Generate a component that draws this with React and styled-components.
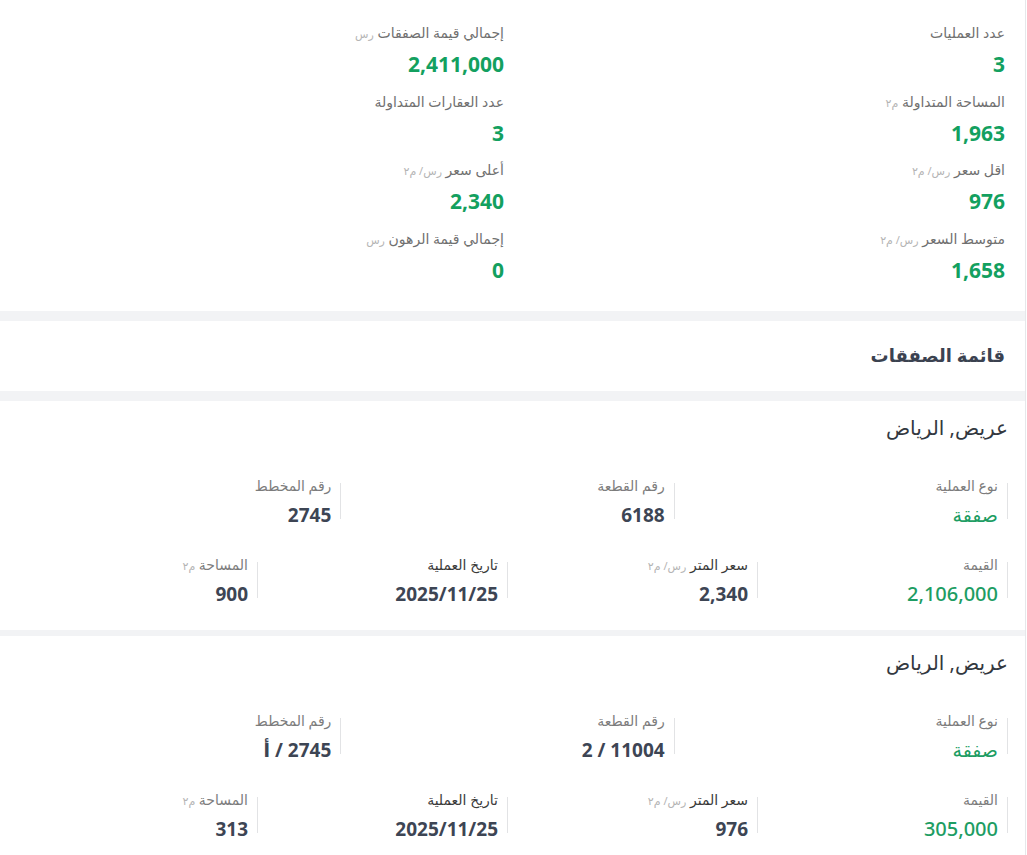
import React from "react";
import styled, { createGlobalStyle } from "styled-components";

const GlobalStyle = createGlobalStyle`
  html, body {
    margin: 0;
    padding: 0;
    background: #ffffff;
  }
  body {
    font-family: "Noto Sans", "DejaVu Sans", sans-serif;
  }
`;

const summary = [
  { label: "عدد العمليات", value: "3" },
  { label: "إجمالي قيمة الصفقات", unit: "رس", value: "2,411,000" },
  { label: "المساحة المتداولة", unit: "م٢", value: "1,963" },
  { label: "عدد العقارات المتداولة", value: "3" },
  { label: "اقل سعر", unit: "رس/ م٢", value: "976" },
  { label: "أعلى سعر", unit: "رس/ م٢", value: "2,340" },
  { label: "متوسط السعر", unit: "رس/ م٢", value: "1,658" },
  { label: "إجمالي قيمة الرهون", unit: "رس", value: "0" },
];

const deals = [
  {
    place: "عريض, الرياض",
    type: "صفقة",
    parcel: "6188",
    plan: "2745",
    price: "2,106,000",
    meter: "2,340",
    date: "2025/11/25",
    area: "900",
  },
  {
    place: "عريض, الرياض",
    type: "صفقة",
    parcel: "11004 / 2",
    plan: "2745 / أ",
    price: "305,000",
    meter: "976",
    date: "2025/11/25",
    area: "313",
  },
];

const Page = styled.div`
  width: 1025px;
  border-right: 1px solid #e6e7ea;
  background: #f2f3f5;
  display: flex;
  flex-direction: column;
`;

const Section = styled.section`
  background: #ffffff;
  margin-bottom: ${(props) => props.$gap || "10px"};
  padding: ${(props) => props.$pad || "0"};
`;

const StatsGrid = styled.div`
  display: grid;
  grid-template-columns: 1fr 1fr;
  column-gap: 17px;
  row-gap: 11.5px;
  padding: 22px 20px 26px;
`;

const Stat = styled.div`
  display: flex;
  flex-direction: column;
  gap: 6px;
`;

const StatLabel = styled.div`
  font-size: 14px;
  line-height: 22px;
  height: 22px;
  color: #707070;
`;

const Unit = styled.span`
  font-size: 11px;
  line-height: 1;
  color: #b4b4b4;
`;

const StatValue = styled.div`
  font-size: 21px;
  line-height: 29px;
  height: 29px;
  font-weight: 700;
  color: #13a05f;
`;

const ListTitle = styled.h2`
  margin: 0;
  font-size: 18px;
  line-height: 28px;
  font-weight: 700;
  color: #3b4250;
  padding: 20px 20px 22px;
`;

const DealTitle = styled.h3`
  margin: 0 0 33px;
  font-size: 20px;
  line-height: 30px;
  height: 30px;
  font-weight: 400;
  color: #333840;
`;

const Row = styled.div`
  display: grid;
  grid-template-columns: repeat(${(props) => props.$cols}, 1fr);
  margin-bottom: ${(props) => props.$mb || "0"};
`;

const Field = styled.div`
  display: flex;
  flex-direction: column;
  gap: 6px;
  padding-right: 10px;
  background: linear-gradient(#e2e3e5, #e2e3e5) right 7px / 1px 36px no-repeat;
`;

const FieldLabel = styled.div`
  font-size: 14px;
  line-height: 20px;
  height: 20px;
  color: ${(props) => (props.$dark ? "#3a3a3a" : "#7c7c7c")};
`;

const FieldValue = styled.div`
  font-size: ${(props) => (props.$big ? "20px" : "19px")};
  line-height: 26px;
  height: 26px;
  font-weight: ${(props) => props.$weight || 700};
  color: ${(props) => (props.$green ? "#1d9d63" : "#3d4554")};
`;

const WithUnit = ({ text, unit }) => (
  <>
    {text}
    {unit && (
      <>
        {" "}
        <Unit>{unit}</Unit>
      </>
    )}
  </>
);

const DealItem = ({ label, unit, value, dark, green, big, weight }) => (
  <Field>
    <FieldLabel $dark={dark}>
      <WithUnit text={label} unit={unit} />
    </FieldLabel>
    <FieldValue $green={green} $big={big} $weight={weight}>
      {value}
    </FieldValue>
  </Field>
);

const DealCard = ({ deal, last }) => (
  <Section $gap={last ? "0" : "6px"} $pad="12px 17px 23px 8px">
    <DealTitle>{deal.place}</DealTitle>
    <Row $cols={3} $mb="27px">
      <DealItem label="نوع العملية" value={deal.type} green weight={400} />
      <DealItem label="رقم القطعة" value={deal.parcel} />
      <DealItem label="رقم المخطط" value={deal.plan} />
    </Row>
    <Row $cols={4}>
      <DealItem label="القيمة" value={deal.price} green big weight={500} />
      <DealItem label="سعر المتر" unit="رس/ م٢" value={deal.meter} dark />
      <DealItem label="تاريخ العملية" value={deal.date} dark />
      <DealItem label="المساحة" unit="م٢" value={deal.area} />
    </Row>
  </Section>
);

export default function App() {
  return (
    <>
      <GlobalStyle />
      <Page dir="rtl">
        <Section>
          <StatsGrid>
            {summary.map((s) => (
              <Stat key={s.label}>
                <StatLabel>
                  <WithUnit text={s.label} unit={s.unit} />
                </StatLabel>
                <StatValue>{s.value}</StatValue>
              </Stat>
            ))}
          </StatsGrid>
        </Section>
        <Section>
          <ListTitle>قائمة الصفقات</ListTitle>
        </Section>
        {deals.map((d, i) => (
          <DealCard key={i} deal={d} last={i === deals.length - 1} />
        ))}
      </Page>
    </>
  );
}
